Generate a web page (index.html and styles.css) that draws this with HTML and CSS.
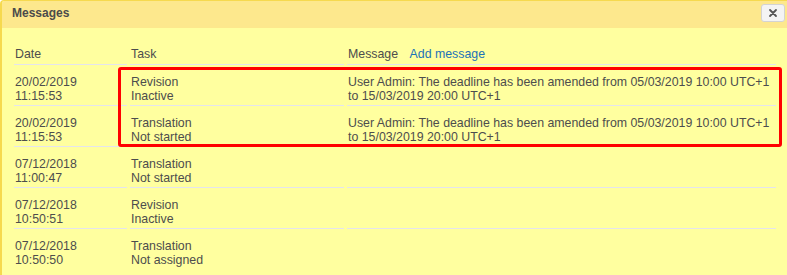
FILE: index.html
```html
<!DOCTYPE html>
<html>
<head>
<meta charset="utf-8">
<link rel="stylesheet" href="styles.css">
</head>
<body>
<div class="dialog">
  <div class="titlebar">
    <span class="title">Messages</span>
    <button class="close" aria-label="Close">
      <svg width="10" height="10" viewBox="0 0 10 10"><path d="M2 2 L8 8 M8 2 L2 8" stroke="#555" stroke-width="1.8" stroke-linecap="round"/></svg>
    </button>
  </div>
  <div class="content">
    <table class="msgs">
      <colgroup><col class="c-date"><col class="c-task"><col class="c-msg"></colgroup>
      <thead>
        <tr><th>Date</th><th>Task</th><th>Message <a class="add" href="#">Add message</a></th></tr>
      </thead>
      <tbody>
        <tr><td>20/02/2019<br>11:15:53</td><td>Revision<br>Inactive</td><td>User Admin: The deadline has been amended from 05/03/2019 10:00 UTC+1<br>to 15/03/2019 20:00 UTC+1</td></tr>
        <tr><td>20/02/2019<br>11:15:53</td><td>Translation<br>Not started</td><td>User Admin: The deadline has been amended from 05/03/2019 10:00 UTC+1<br>to 15/03/2019 20:00 UTC+1</td></tr>
        <tr><td>07/12/2018<br>11:00:47</td><td>Translation<br>Not started</td><td></td></tr>
        <tr><td>07/12/2018<br>10:50:51</td><td>Revision<br>Inactive</td><td></td></tr>
        <tr class="last"><td>07/12/2018<br>10:50:50</td><td>Translation<br>Not assigned</td><td></td></tr>
      </tbody>
    </table>
    <div class="highlight"></div>
  </div>
</div>
</body>
</html>
```
FILE: styles.css
```css
html, body {
  margin: 0;
  padding: 0;
  background: #ffffff;
  overflow: hidden;
}
body {
  font-family: "Liberation Sans", Arial, sans-serif;
  font-size: 12.35px;
  color: #4d4d4d;
}
.dialog {
  width: 787px;
  height: 280px;
  border: 1px solid #f6d94f;
  border-left-width: 2px;
  border-right: none;
  border-radius: 4px 0 0 4px;
  background: #ffff9f;
  overflow: hidden;
  box-sizing: border-box;
}
.titlebar {
  height: 27px;
  background: #fde88d;
  display: flex;
  align-items: center;
  justify-content: space-between;
  padding: 0 2px 0 10px;
}
.title {
  font-weight: bold;
  font-size: 12px;
  color: #4b4b4b;
  margin-top: -3px;
}
.close {
  width: 24px;
  height: 18px;
  margin-top: -3px;
  border: 1px solid #d3d3d3;
  border-radius: 3px;
  background: #f4f4f4;
  display: flex;
  align-items: center;
  justify-content: center;
  padding: 0;
}
.content {
  position: relative;
  padding: 17px 9px 0 9px;
}
.msgs {
  border-collapse: separate;
  border-spacing: 3px 0;
  table-layout: fixed;
  width: 768px;
}
.c-date { width: 113px; }
.c-task { width: 214px; }
.c-msg { width: 429px; }
.msgs th {
  text-align: left;
  font-weight: normal;
  line-height: 14px;
  padding: 2px 1px 3px 1px;
  border-bottom: 1px solid #e4e4ee;
}
.msgs td {
  vertical-align: top;
  line-height: 14px;
  padding: 10px 1px 2px 1px;
  border-bottom: 1px solid #e4e4ee;
}
.msgs tr.last td {
  border-bottom: none;
}
.add {
  color: #1b72b8;
  text-decoration: none;
  margin-left: 8px;
}
.highlight {
  position: absolute;
  left: 116px;
  top: 39px;
  width: 664px;
  height: 80px;
  border: 3px solid #ff0000;
  border-radius: 3px;
  box-sizing: border-box;
}
```
